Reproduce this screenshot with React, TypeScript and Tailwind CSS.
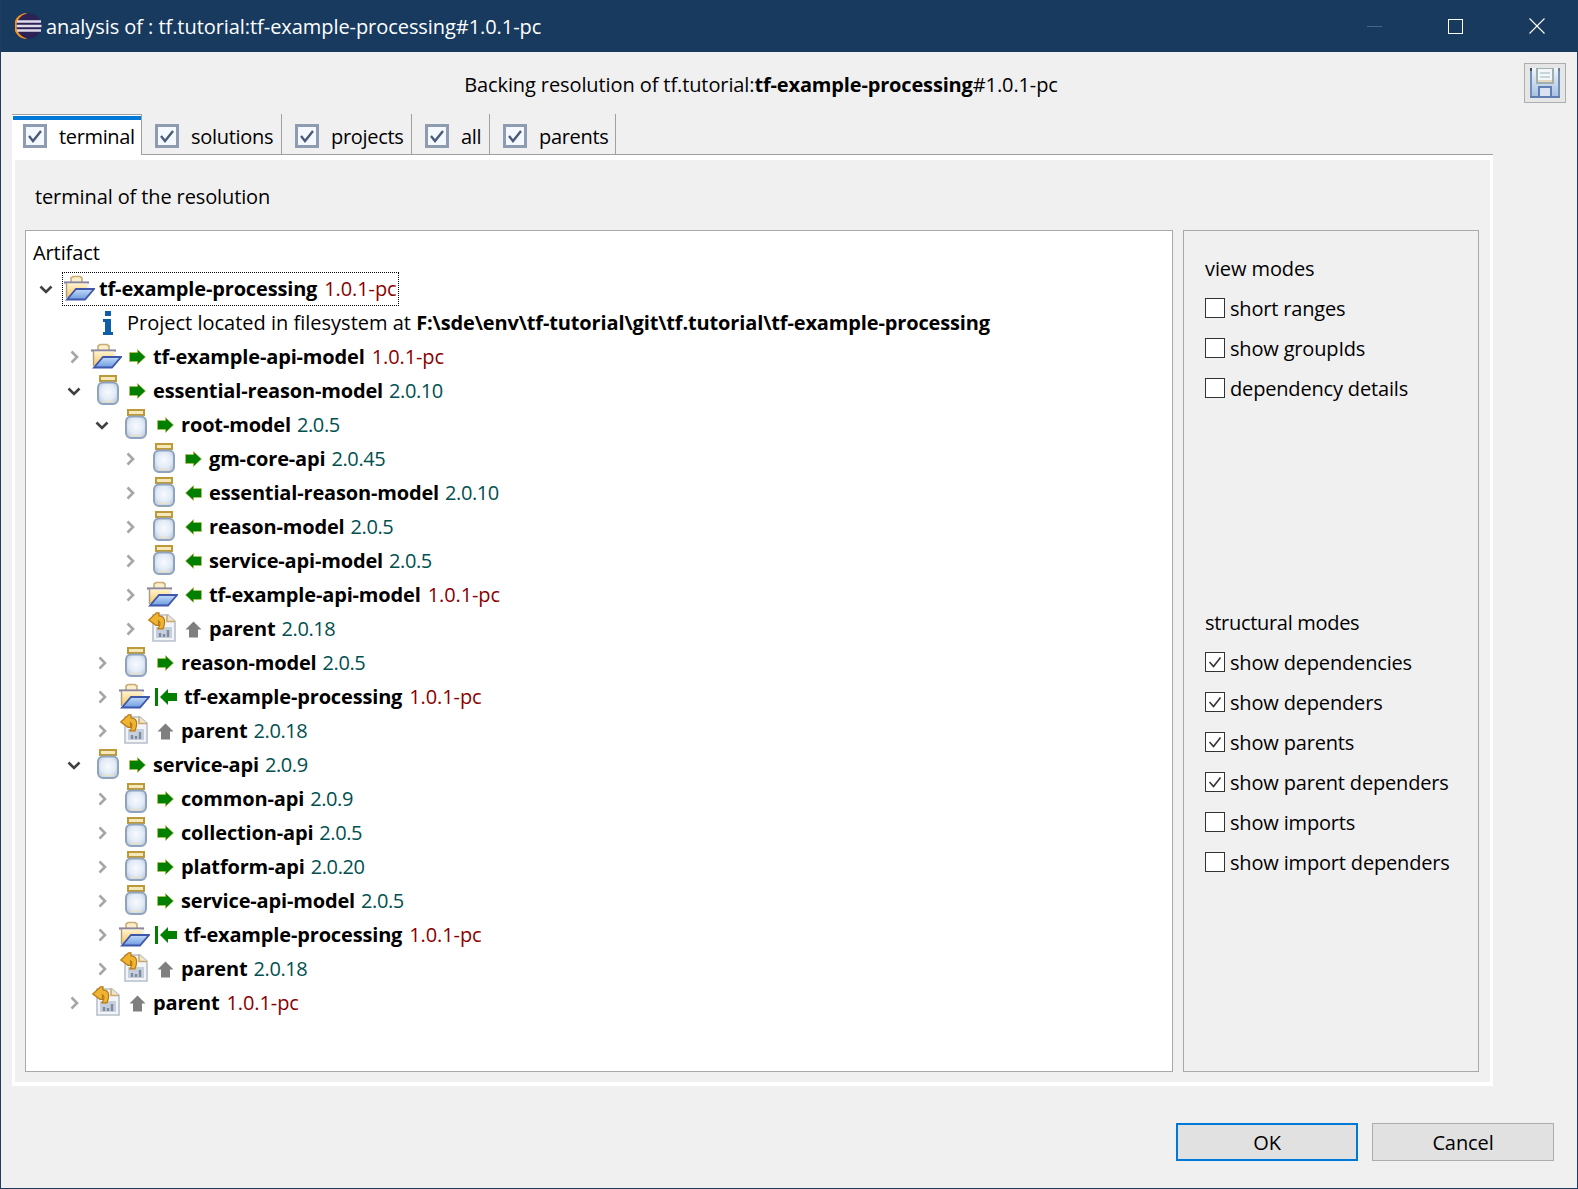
import React from 'react';

const FONT = "font-['Open_Sans','Noto_Sans',sans-serif]";

type Row = {
  depth: number;
  open?: boolean;
  icon: 'folder' | 'jar' | 'parent';
  arrow?: 'right' | 'left' | 'up' | 'back';
  name: string;
  version: string;
};

const rows: Row[] = [
  { depth: 1, icon: 'folder', arrow: 'right', name: 'tf-example-api-model', version: '1.0.1-pc' },
  { depth: 1, open: true, icon: 'jar', arrow: 'right', name: 'essential-reason-model', version: '2.0.10' },
  { depth: 2, open: true, icon: 'jar', arrow: 'right', name: 'root-model', version: '2.0.5' },
  { depth: 3, icon: 'jar', arrow: 'right', name: 'gm-core-api', version: '2.0.45' },
  { depth: 3, icon: 'jar', arrow: 'left', name: 'essential-reason-model', version: '2.0.10' },
  { depth: 3, icon: 'jar', arrow: 'left', name: 'reason-model', version: '2.0.5' },
  { depth: 3, icon: 'jar', arrow: 'left', name: 'service-api-model', version: '2.0.5' },
  { depth: 3, icon: 'folder', arrow: 'left', name: 'tf-example-api-model', version: '1.0.1-pc' },
  { depth: 3, icon: 'parent', arrow: 'up', name: 'parent', version: '2.0.18' },
  { depth: 2, icon: 'jar', arrow: 'right', name: 'reason-model', version: '2.0.5' },
  { depth: 2, icon: 'folder', arrow: 'back', name: 'tf-example-processing', version: '1.0.1-pc' },
  { depth: 2, icon: 'parent', arrow: 'up', name: 'parent', version: '2.0.18' },
  { depth: 1, open: true, icon: 'jar', arrow: 'right', name: 'service-api', version: '2.0.9' },
  { depth: 2, icon: 'jar', arrow: 'right', name: 'common-api', version: '2.0.9' },
  { depth: 2, icon: 'jar', arrow: 'right', name: 'collection-api', version: '2.0.5' },
  { depth: 2, icon: 'jar', arrow: 'right', name: 'platform-api', version: '2.0.20' },
  { depth: 2, icon: 'jar', arrow: 'right', name: 'service-api-model', version: '2.0.5' },
  { depth: 2, icon: 'folder', arrow: 'back', name: 'tf-example-processing', version: '1.0.1-pc' },
  { depth: 2, icon: 'parent', arrow: 'up', name: 'parent', version: '2.0.18' },
  { depth: 1, icon: 'parent', arrow: 'up', name: 'parent', version: '1.0.1-pc' },
];

const Chevron = ({ open }: { open?: boolean }) => (
  <svg width="16" height="16" viewBox="0 0 16 16" fill="none" strokeWidth="2.6" stroke={open ? '#404040' : '#a6a6a6'}>
    {open ? <path d="M2.5 5.5l5.5 5.5 5.5-5.5" /> : <path d="M5.5 2.5l5.5 5.5-5.5 5.5" />}
  </svg>
);

const FolderIcon = () => (
  <svg className="mb-[3px]" width="32" height="26" viewBox="0 0 32 26">
    <defs>
      <linearGradient id="fy" x1="0" y1="0" x2="0" y2="1">
        <stop offset="0" stopColor="#fff3cc" />
        <stop offset="1" stopColor="#f8c868" />
      </linearGradient>
      <linearGradient id="fb" x1="0" y1="0" x2="0" y2="1">
        <stop offset="0" stopColor="#c4dcf8" />
        <stop offset="1" stopColor="#6c9be0" />
      </linearGradient>
    </defs>
    <path d="M8 7V3l2-1.5h7L19 3v4" fill="#fbeecb" stroke="#c9ad74" strokeWidth="1.6" />
    <path d="M1 7.5h25" stroke="#8d86a0" strokeWidth="2.2" />
    <path d="M4 8.5h20V14H13L6 22H4z" fill="url(#fy)" />
    <path d="M3.5 8v15" stroke="#a89c84" strokeWidth="1.4" />
    <path d="M24 9.5h2.5v3.5H24z" fill="#eef2f8" />
    <path d="M13 14h18l-9 10.5H4z" fill="url(#fb)" stroke="#3f57ab" strokeWidth="1.8" />
  </svg>
);

const JarIcon = () => (
  <svg className="mb-[3px] ml-[4px]" width="22" height="30" viewBox="0 0 22 30">
    <defs>
      <radialGradient id="jb" cx="0.5" cy="0.45" r="0.6">
        <stop offset="0" stopColor="#f8fafe" />
        <stop offset="0.6" stopColor="#e2ebf6" />
        <stop offset="1" stopColor="#bccbe0" />
      </radialGradient>
    </defs>
    <rect x="3" y="1" width="16" height="5" fill="#f5e9bb" stroke="#bc9a3a" strokeWidth="2" />
    <rect x="1" y="7.5" width="20" height="21.5" rx="5" fill="url(#jb)" stroke="#8fa3bd" strokeWidth="2" />
    <path d="M5 26.5h12" stroke="#e8e2c8" strokeWidth="1.4" />
  </svg>
);

const ParentIcon = () => (
  <svg className="mb-[5px]" width="28" height="30" viewBox="0 0 28 30">
    <path d="M5 3h15l7 6v20H5z" fill="#f2f4f8" stroke="#b8c0cc" strokeWidth="1.6" />
    <path d="M19 2.5v7h8" fill="#f0e4c4" stroke="#c8aa70" strokeWidth="1.6" />
    <rect x="8" y="15" width="16" height="11" fill="#c6cfdc" />
    <path d="M12 25v-4M16 25v-3M20 25v-7" stroke="#7e8aa0" strokeWidth="2.4" />
    <path d="M0.8 8L8.5 0.8h2.5v3c5 0 7.5 4 4 13h-5c2.5-4 2.5-7 0.5-8v4.5H8z" fill="#f0b433" stroke="#b87a14" strokeWidth="1.2" />
  </svg>
);

const RightArrow = () => (
  <svg width="17" height="16" viewBox="0 0 17 16">
    <path d="M0.5 3.5h8V0.5L16.5 8l-8 7.5v-3h-8z" fill="#008000" stroke="#c4c04a" strokeWidth="0.6" />
  </svg>
);

const LeftArrow = () => (
  <svg width="17" height="16" viewBox="0 0 17 16">
    <path d="M16.5 3.5h-8V0.5L0.5 8l8 7.5v-3h8z" fill="#008000" stroke="#c4c04a" strokeWidth="0.6" />
  </svg>
);

const UpArrow = () => (
  <svg width="17" height="17" viewBox="0 0 17 17">
    <path d="M8.5 0.5L16.5 8.5h-3.5v8H4v-8H0.5z" fill="#7f7f7f" />
  </svg>
);

const BackArrow = () => (
  <svg width="22" height="18" viewBox="0 0 22 18">
    <rect x="0" y="0" width="3" height="18" fill="#008000" />
    <path d="M22 5h-9V1L5 9l8 8v-4h9z" fill="#008000" />
  </svg>
);

const TreeRow = ({ row }: { row: Row }) => (
  <div className="flex h-[34px] items-center" style={{ paddingLeft: 10 + row.depth * 28 }}>
    <div className="flex w-[20px] justify-center"><Chevron open={row.open} /></div>
    <div className="ml-[6px] flex h-[34px] w-[32px] items-center justify-center">
      {row.icon === 'folder' && <FolderIcon />}
      {row.icon === 'jar' && <JarIcon />}
      {row.icon === 'parent' && <ParentIcon />}
    </div>
    <div className={row.arrow === 'back' ? 'ml-[5px] mr-[7px] w-[22px]' : 'ml-[7px] mr-[7px] w-[17px]'}>
      {row.arrow === 'right' && <RightArrow />}
      {row.arrow === 'left' && <LeftArrow />}
      {row.arrow === 'up' && <UpArrow />}
      {row.arrow === 'back' && <BackArrow />}
    </div>
    <span className="font-bold tracking-[-0.16px]">{row.name}</span>
    <span className={row.version.endsWith('pc') ? 'ml-[7px] tracking-[-0.1px] text-[#8b0000]' : 'ml-[6px] tracking-[-0.4px] text-[#005050]'}>{row.version}</span>
  </div>
);

const TabCheck = () => (
  <svg width="24" height="24" viewBox="0 0 24 24">
    <rect x="1.5" y="1.5" width="21" height="21" fill="#f4f9ff" stroke="#8e9bb0" strokeWidth="3" />
    <path d="M6 12l4 5 8-10" fill="none" stroke="#4a5a78" strokeWidth="2.4" />
  </svg>
);

const Tab = ({ label, active, className }: { label: string; active?: boolean; className: string }) => {
  if (active) {
    return (
      <div className="flex h-[41px] w-[130px] flex-col border-r border-t border-[#a0a0a0] bg-white">
        <div className="ml-px mt-px h-[4px] bg-[#0078d7]" />
        <div className="flex flex-1 items-center pb-[3px] pl-[11px]">
          <TabCheck />
          <span className="ml-[12px] pt-[2px] tracking-[-0.35px]">{label}</span>
        </div>
      </div>
    );
  }
  return (
    <div className={`flex h-[40px] items-center border-r border-[#a0a0a0] pt-[4px] ${className}`}>
      <TabCheck />
      <span className="ml-[12px] pt-[2px] tracking-[-0.3px]">{label}</span>
    </div>
  );
};

const Check = ({ label, checked }: { label: string; checked?: boolean }) => (
  <div className="flex h-[40px] items-center">
    <div className="mb-[3px] flex h-[20px] w-[20px] items-center justify-center border border-[#333333] bg-white">
      {checked && (
        <svg width="16" height="16" viewBox="0 0 16 16">
          <path d="M2.5 8l4 4.5 7-9" fill="none" stroke="#333333" strokeWidth="1.6" />
        </svg>
      )}
    </div>
    <span className="ml-[5px] tracking-[-0.17px]">{label}</span>
  </div>
);

export default function App() {
  return (
    <div className={`flex h-[1189px] w-[1578px] flex-col overflow-hidden border-x border-b border-[#1f3c5f] bg-[#f0f0f0] text-[20px] text-black ${FONT}`}>
      <div className="-mx-px flex h-[52px] shrink-0 items-center bg-[#173a5e] text-white">
        <svg className="ml-[15px]" width="27" height="26" viewBox="0 0 27 26">
          <path d="M12 0a13 13 0 1 0 0 26 16 16 0 0 1 0-26z" fill="#f7941e" />
          <circle cx="14" cy="13" r="12.5" fill="#2c2255" />
          <path d="M2 8.5h24M1.5 13h25M2 17.5h24" stroke="#dedbea" strokeWidth="2.4" />
        </svg>
        <span className="ml-[4px] pt-[2px] tracking-[-0.06px]">analysis of : tf.tutorial:tf-example-processing#1.0.1-pc</span>
        <div className="ml-auto flex items-center">
          <div className="mr-[66px] h-px w-[15px] bg-[#4a6484]" />
          <div className="mr-[66px] h-[15px] w-[15px] border border-white" />
          <svg className="mr-[33px]" width="16" height="16" viewBox="0 0 16 16">
            <path d="M0.5 0.5l15 15M15.5 0.5l-15 15" stroke="#ffffff" strokeWidth="1.1" />
          </svg>
        </div>
      </div>

      <div className="flex flex-1">
        <div className="ml-[11px] flex w-[1481px] flex-col">
          <div className="flex h-[62px] shrink-0 items-center justify-center pl-[17px]">
            <span className="mt-[3px] tracking-[-0.1px]">
              Backing resolution of tf.tutorial:<b className="tracking-[-0.16px]">tf-example-processing</b>#1.0.1-pc
            </span>
          </div>

          <div className="flex h-[41px] shrink-0 items-start border-b border-[#a0a0a0]">
            <Tab label="terminal" active className="" />
            <Tab label="solutions" className="w-[140px] pl-[13px]" />
            <Tab label="projects" className="w-[130px] pl-[13px]" />
            <Tab label="all" className="w-[78px] pl-[13px]" />
            <Tab label="parents" className="w-[126px] pl-[13px]" />
          </div>

          <div className="flex h-[931px] shrink-0 flex-col border-x-[3px] border-b-[4px] border-t-[5px] border-white bg-[#f0f0f0] pl-[10px] pr-[10px]">
            <div className="flex h-[70px] shrink-0 items-center pl-[10px] pt-[4px] tracking-[-0.12px]">terminal of the resolution</div>
            <div className="flex h-[842px] shrink-0 gap-[10px]">
              <div className="w-[1148px] border border-[#a9a9a9] bg-white">
                <div className="flex h-[41px] items-center pl-[7px] pt-[3px] tracking-[-0.1px]">Artifact</div>
                <div className="flex h-[34px] items-center pl-[10px]">
                  <div className="flex w-[20px] justify-center"><Chevron open /></div>
                  <div className="ml-[6px] flex h-[34px] w-[337px] items-center border border-dotted border-black">
                    <FolderIcon />
                    <span className="ml-[4px] font-bold tracking-[-0.16px]">tf-example-processing</span>
                    <span className="ml-[7px] tracking-[-0.1px] text-[#8b0000]">1.0.1-pc</span>
                  </div>
                </div>
                <div className="flex h-[34px] items-center pl-[76px]">
                  <svg width="12" height="24" viewBox="0 0 12 24">
                    <rect x="3" y="0" width="6" height="5" fill="#0f5ea8" />
                    <path d="M1 8h8v13h2v3H1v-3h2V11H1z" fill="#0f5ea8" />
                  </svg>
                  <span className="ml-[13px]">
                    Project located in filesystem at <b className="tracking-[-0.14px]">F:\sde\env\tf-tutorial\git\tf.tutorial\tf-example-processing</b>
                  </span>
                </div>
                {rows.map((row, i) => (
                  <TreeRow key={i} row={row} />
                ))}
              </div>
              <div className="w-[296px] border border-[#a9a9a9] pl-[21px] pt-[18px]">
                <div className="flex h-[40px] items-center tracking-[-0.1px]">view modes</div>
                <Check label="short ranges" />
                <Check label="show groupIds" />
                <Check label="dependency details" />
                <div className="h-[194px]" />
                <div className="flex h-[40px] items-center tracking-[-0.3px]">structural modes</div>
                <Check label="show dependencies" checked />
                <Check label="show dependers" checked />
                <Check label="show parents" checked />
                <Check label="show parent dependers" checked />
                <Check label="show imports" />
                <Check label="show import dependers" />
              </div>
            </div>
          </div>

          <div className="mt-[37px] flex justify-end gap-[14px] self-end mr-[-61px]">
            <div className="flex h-[38px] w-[182px] items-center justify-center border-2 border-[#0078d7] bg-[#e1e1e1] pt-[1px] tracking-[-0.1px]">OK</div>
            <div className="flex h-[38px] w-[182px] items-center justify-center border border-[#adadad] bg-[#e1e1e1] pt-[1px] tracking-[-0.1px]">Cancel</div>
          </div>
        </div>

        <div className="ml-[31px] mt-[11px] flex h-[40px] w-[42px] items-center justify-center border border-[#adadad] bg-[#e6e6e6]">
          <svg width="30" height="30" viewBox="0 0 30 30">
            <defs>
              <linearGradient id="sv" x1="0" y1="0" x2="0" y2="1">
                <stop offset="0" stopColor="#f0f4fa" />
                <stop offset="1" stopColor="#a4bee0" />
              </linearGradient>
            </defs>
            <rect x="0" y="0" width="30" height="30" fill="url(#sv)" />
            <rect x="0" y="0" width="2" height="30" fill="#7090bc" />
            <rect x="28" y="0" width="2" height="30" fill="#7090bc" />
            <rect x="0" y="0" width="2" height="3" fill="#3c4c5c" />
            <rect x="28" y="0" width="2" height="3" fill="#6c8080" />
            <rect x="0" y="28" width="30" height="2" fill="#5f7fb4" />
            <rect x="6" y="0" width="18" height="16" fill="#9fb0b0" />
            <rect x="8" y="1" width="14" height="12" fill="#f4f7f8" />
            <rect x="10" y="4" width="10" height="2" fill="#c8d4dc" />
            <rect x="10" y="8" width="10" height="2" fill="#c8d4dc" />
            <rect x="8" y="12" width="14" height="2" fill="#e6d8c0" />
            <rect x="9" y="19" width="12" height="10" fill="#d8e2f0" stroke="#5f7fb4" strokeWidth="2" />
          </svg>
        </div>
      </div>
    </div>
  );
}
